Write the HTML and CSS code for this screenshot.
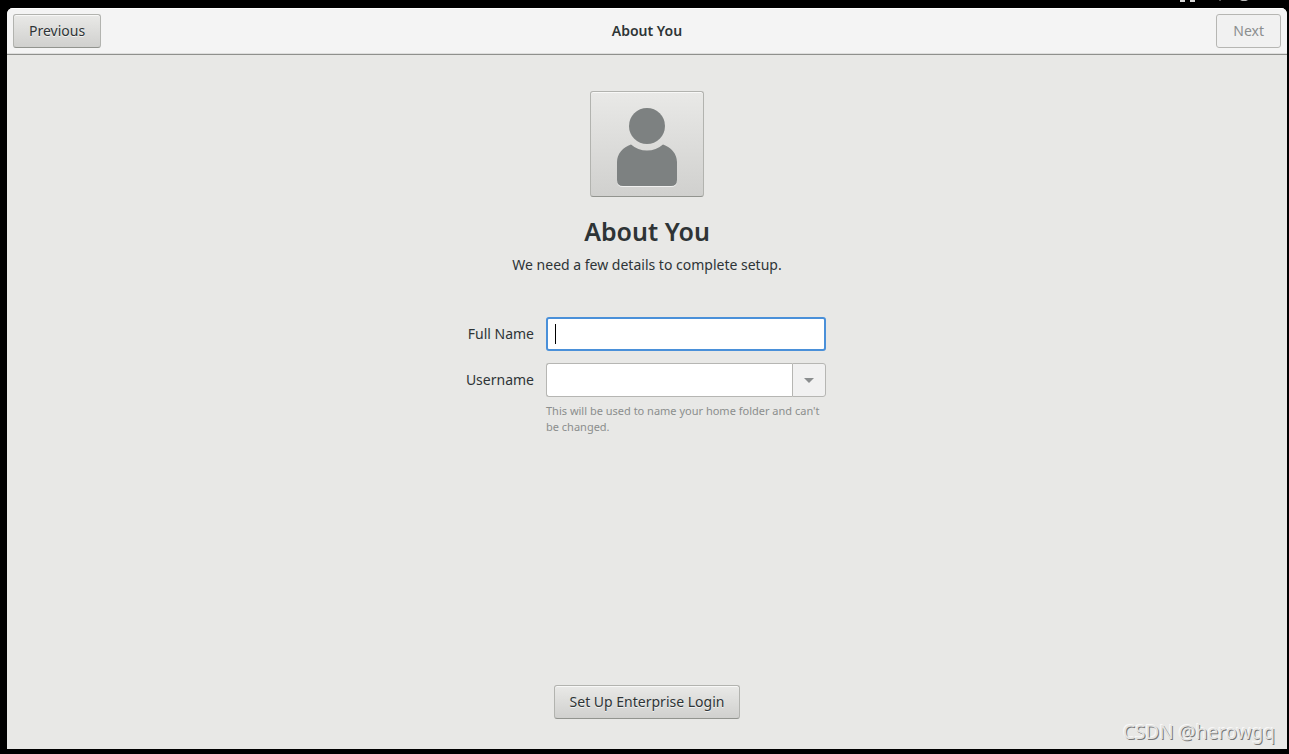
FILE: index.html
```html
<!DOCTYPE html>
<html lang="en">
<head>
<meta charset="utf-8">
<title>About You</title>
<link rel="stylesheet" href="styles.css">
</head>
<body>
<svg class="tray" width="72" height="2" viewBox="0 0 72 2" aria-hidden="true">
  <path d="M0 0h5v2h-5zM10 0h5v2h-5z" fill="#d8d8d8"/>
  <path d="M39 0h2v1h-2z" fill="#555"/>
  <path d="M60 0h8l-2 1h-4z" fill="#bbb"/>
</svg>
<div class="window">
  <header class="headerbar">
    <button class="button" type="button">Previous</button>
    <div class="title">About You</div>
    <button class="button next" type="button" disabled>Next</button>
  </header>
  <main class="page">
    <button class="button avatar" type="button" aria-label="Choose picture">
      <svg width="60" height="80" viewBox="0 0 60 80" aria-hidden="true">
        <g fill="#f0f0ef" transform="translate(0 1)">
          <path d="M14 37.5A24 24 0 0 0 46 37.5C54 40 60 47 60 55V73Q60 79 54 79H6Q0 79 0 73V55C0 47 6 40 14 37.5Z"/>
        </g>
        <g class="person">
          <circle cx="30" cy="19" r="18"/>
          <path d="M14 37.5A24 24 0 0 0 46 37.5C54 40 60 47 60 55V73Q60 79 54 79H6Q0 79 0 73V55C0 47 6 40 14 37.5Z"/>
        </g>
      </svg>
    </button>
    <h1 class="heading">About You</h1>
    <p class="subtitle">We need a few details to complete setup.</p>
    <form class="form">
      <label class="label" for="fullname">Full Name</label>
      <div class="field">
        <input class="entry focused" id="fullname" type="text">
        <span class="caret"></span>
      </div>
      <label class="label" for="username">Username</label>
      <div class="combo">
        <input class="entry" id="username" type="text" aria-describedby="hint">
        <button class="arrow" type="button" disabled aria-label="Show suggestions">
          <svg width="10" height="5" viewBox="0 0 10 5" aria-hidden="true"><path d="M0 0h10L5 5z" fill="#8b8e8f"/></svg>
        </button>
      </div>
      <p class="hint" id="hint">This will be used to name your home folder and can't be changed.</p>
    </form>
    <button class="button enterprise" type="button">Set Up Enterprise Login</button>
  </main>
  <div class="watermark">CSDN @herowgq</div>
</div>
</body>
</html>
```
FILE: styles.css
```css
* { box-sizing: border-box; }
body {
  margin: 0;
  height: 100vh;
  padding: 8px 2px 5px 7px;
  display: flex;
  background: #000;
  color: #2e3436;
  font: 14px/20px "Noto Sans", "Open Sans", sans-serif;
}
.tray { position: absolute; top: 0; right: 37px; }
.window {
  position: relative;
  flex: 1;
  display: flex;
  flex-direction: column;
  overflow: hidden;
  border-radius: 6px 6px 0 0;
  background: #e8e8e6;
}
.headerbar {
  display: grid;
  grid-template-columns: 1fr auto 1fr;
  align-items: center;
  padding: 6px;
  border-bottom: 1px solid #8f908d;
  background: #f4f4f4;
  box-shadow: inset 0 1px #fff, inset 0 -1px #dededd;
}
.title { font-weight: 600; }
.button {
  justify-self: start;
  height: 34px;
  padding: 0 15px;
  border: 1px solid #b2b3af;
  border-bottom-color: #92948f;
  border-radius: 3px;
  background: linear-gradient(#e9e9e7, #d0d0ce);
  box-shadow: inset 0 1px #f8f8f7;
  color: inherit;
  font: inherit;
  text-shadow: 0 1px #f3f3f2;
  white-space: nowrap;
}
.next {
  justify-self: end;
  padding: 0 16px;
  border-color: #b6b6b3;
  background: #f1f1f1;
  box-shadow: none;
  color: #8b8e8f;
  text-shadow: none;
}
.page {
  flex: 1;
  display: flex;
  flex-direction: column;
  align-items: center;
  padding: 36px 16px 30px;
}
.avatar {
  display: grid;
  place-items: center;
  width: 114px;
  height: 106px;
  padding: 6px 0 0;
}
.person { fill: #7d8181; }
.heading {
  margin: 18px 0 8px;
  font-size: 25px;
  line-height: 32px;
  font-weight: 600;
}
.subtitle { margin: 0 0 42px; }
.form {
  display: grid;
  grid-template-columns: 66px 280px;
  column-gap: 12px;
  align-items: center;
}
.label { justify-self: end; white-space: nowrap; }
.field { position: relative; margin-bottom: 12px; }
.form .label:first-child { margin-bottom: 12px; }
.entry {
  display: block;
  width: 100%;
  height: 34px;
  padding: 0 8px;
  border: 1px solid #b6b6b3;
  border-radius: 3px;
  outline: none;
  background: #fff;
  color: inherit;
  font: inherit;
}
.focused { border: 2px solid #4a90d9; }
.caret {
  position: absolute;
  left: 9px;
  top: 7px;
  width: 1px;
  height: 20px;
  background: #000;
}
.combo { display: flex; }
.combo .entry { flex: 1; min-width: 0; border-right: 0; border-radius: 3px 0 0 3px; }
.arrow {
  display: grid;
  place-items: center;
  width: 34px;
  padding: 0;
  border: 1px solid #b6b6b3;
  border-radius: 0 3px 3px 0;
  background: #f1f1f1;
}
.hint {
  grid-column: 2;
  margin: 6px 0 0;
  color: #8b8e8d;
  font-size: 11px;
  line-height: 16px;
}
.enterprise { margin-top: auto; }
.watermark {
  position: absolute;
  right: 12px;
  bottom: 4px;
  color: #e4e4e2;
  font-size: 19px;
  line-height: 26px;
  text-shadow: 1px 1px #777, -1px -1px #f8f8f8;
}
```
